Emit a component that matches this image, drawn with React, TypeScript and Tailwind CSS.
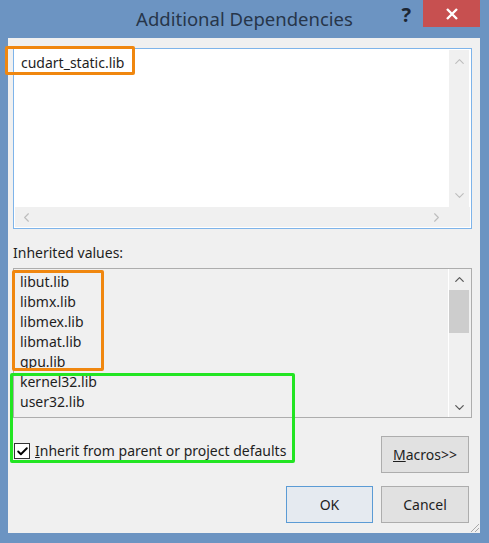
import { ChevronUp, ChevronDown, ChevronLeft, ChevronRight, Check } from "lucide-react";

const inherited = ["libut.lib", "libmx.lib", "libmex.lib", "libmat.lib", "gpu.lib", "kernel32.lib", "user32.lib"];

function App() {
  return (
    <div className="relative w-[489px] h-[543px] bg-[#6c94c2] flex flex-col font-['Noto_Sans',sans-serif] text-[14px] text-[#1e1e1e]">
      {/* title bar */}
      <div className="h-[38px] grid grid-cols-[1fr_auto_1fr]">
        <div />
        <div className="pt-[4px] text-[18.5px] leading-[30px] text-[#27364a]">Additional Dependencies</div>
        <div className="flex justify-end items-start">
          <span className="mt-[3px] mr-[12px] text-[20px] font-bold leading-[24px] text-[#1c2633]">?</span>
          <button className="w-[57px] h-[27px] mr-[9px] bg-[#c75050] flex items-center justify-center text-white">
            <svg width="12" height="12" viewBox="0 0 12 12">
              <path d="M1 1 L11 11 M11 1 L1 11" stroke="white" strokeWidth="2.4" />
            </svg>
          </button>
        </div>
      </div>

      {/* client area */}
      <div className="relative mx-[8px] w-[472px] h-[495px] bg-[#f0f0f0] px-[5px] pt-[10px] flex flex-col">
        <div className="w-[459px] h-[181px] border border-[#7eb4ea] bg-white p-px flex flex-col">
          <div className="flex-1 flex">
            <div className="flex-1 pl-[6px] pt-[3px] leading-[20px]">cudart_static.lib</div>
            <div className="w-[20px] mr-[1px] bg-[#f0f0f0] flex flex-col justify-between items-center py-[4px] text-[#bdbdbd]">
              <ChevronUp size={15} strokeWidth={1.8} />
              <ChevronDown size={15} strokeWidth={1.8} />
            </div>
          </div>
          <div className="h-[20px] bg-[#f0f0f0] flex items-center justify-between pl-[4px] pr-[26px] text-[#bdbdbd]">
            <ChevronLeft size={15} strokeWidth={1.8} />
            <ChevronRight size={15} strokeWidth={1.8} />
          </div>
        </div>

        <div className="mt-[14px] mb-[5px] leading-[20px]">Inherited values:</div>

        <div className="w-[459px] h-[150px] border border-[#adadad] bg-[#f0f0f0] flex">
          <div className="flex-1 pl-[6px] pt-[3px] leading-[20px]">
            {inherited.map((v) => (
              <div key={v}>{v}</div>
            ))}
          </div>
          <div className="w-[21px] mr-[2px] border-l border-white flex flex-col items-center text-[#5a5a5a]">
            <div className="h-[21px] flex items-center justify-center">
              <ChevronUp size={15} strokeWidth={2} />
            </div>
            <div className="w-[20px] h-[43px] bg-[#cdcdcd]" />
            <div className="flex-1" />
            <div className="h-[20px] flex items-center justify-center">
              <ChevronDown size={15} strokeWidth={2} />
            </div>
          </div>
        </div>

        <div className="mt-[18px] flex justify-between items-start">
          <label className="mt-[5px] ml-[1px] flex items-center gap-[5px] leading-[20px]">
            <span className="w-[16px] h-[16px] border border-[#333] bg-white flex items-center justify-center">
              <Check size={13} strokeWidth={3.5} className="text-black" />
            </span>
            <span>
              <span className="underline">I</span>nherit from parent or project defaults
            </span>
          </label>
          <button className="w-[88px] h-[37px] mr-[6px] border border-[#adadad] bg-[#e1e1e1]">
            <span className="underline">M</span>acros&gt;&gt;
          </button>
        </div>

        <div className="mt-[13px] flex justify-end gap-[8px] pr-[6px]">
          <button className="w-[87px] h-[37px] border border-[#5b9bd5] bg-[#e5eaf0]">OK</button>
          <button className="w-[88px] h-[37px] border border-[#adadad] bg-[#e1e1e1]">Cancel</button>
        </div>

        {/* resize grip */}
        <svg className="absolute right-0 bottom-0" width="12" height="12" viewBox="0 0 12 12">
          <path d="M11 3 L3 11 M11 7 L7 11 M11 11 L11 11" stroke="#a9a9a9" strokeWidth="1" />
        </svg>
      </div>

      {/* annotation boxes */}
      <div className="absolute left-[5px] top-[46px] w-[130px] h-[29px] border-[3px] border-[#f0870f] rounded-[2px]" />
      <div className="absolute left-[12px] top-[270px] w-[92px] h-[101px] border-[3px] border-[#f0870f] rounded-[2px]" />
      <div className="absolute left-[10px] top-[373px] w-[285px] h-[90px] border-[3px] border-[#22e522] rounded-[2px]" />
    </div>
  );
}

export default App;
